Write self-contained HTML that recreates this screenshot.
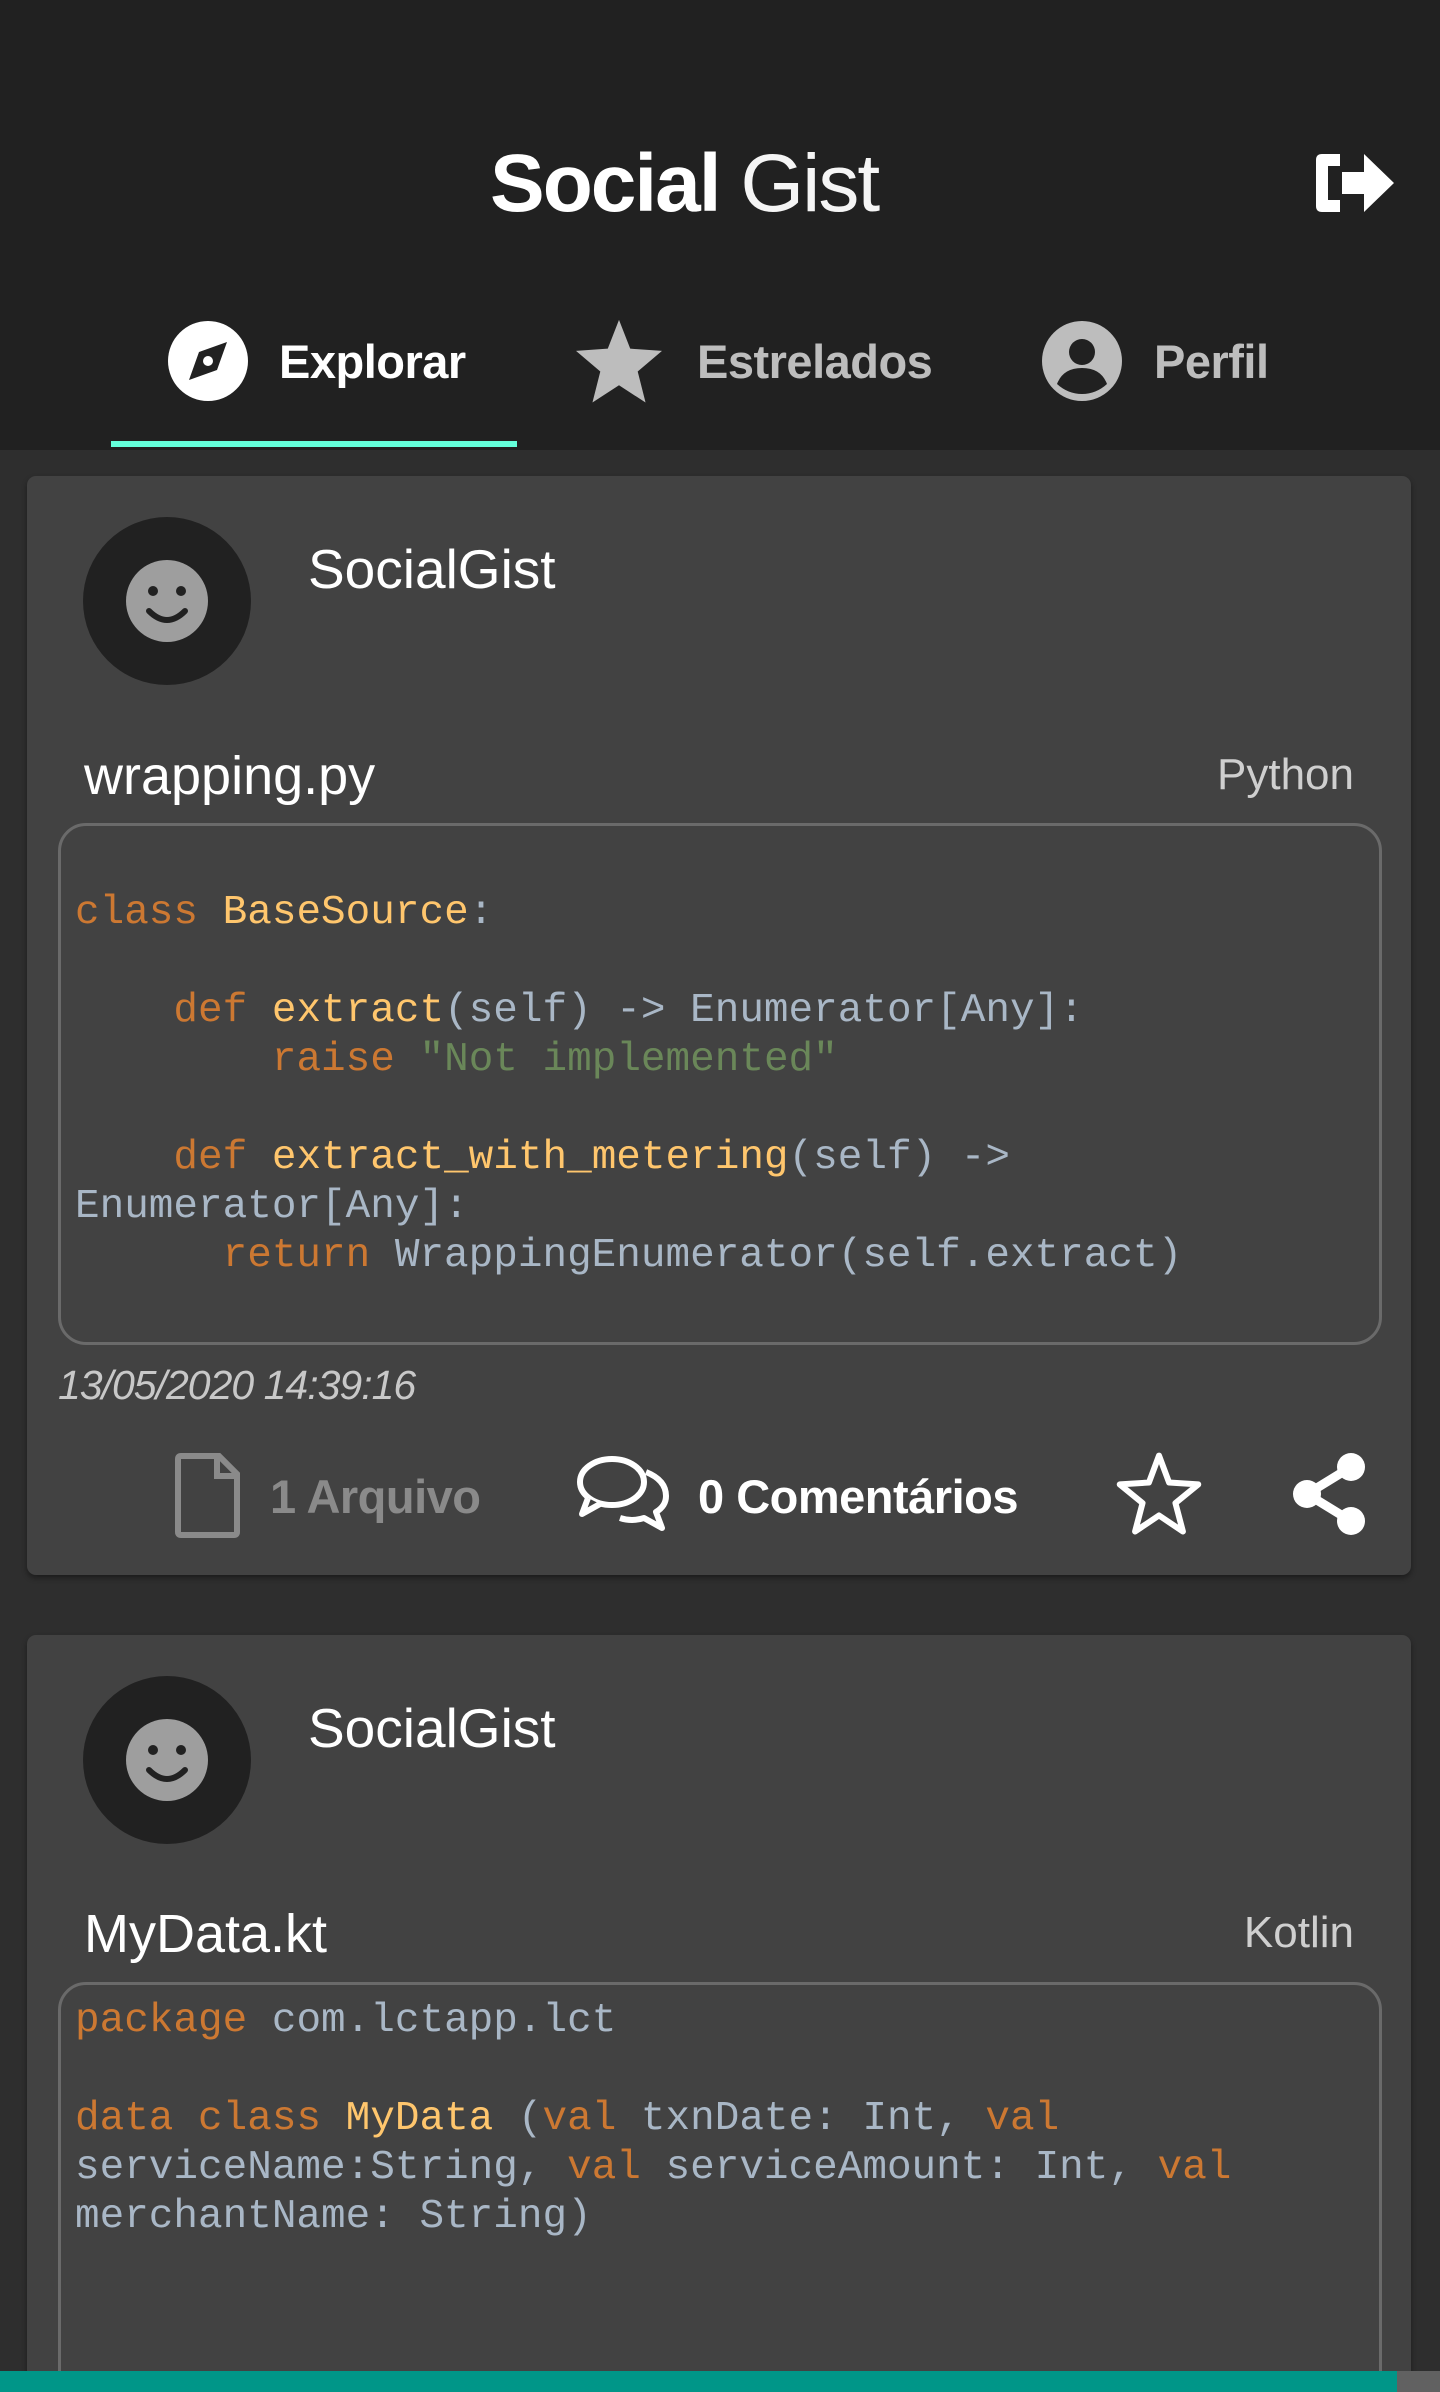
<!DOCTYPE html>
<html style="width:1440px;height:2392px;overflow:hidden"><head><meta charset="utf-8"><style>
*{margin:0;padding:0;box-sizing:border-box}
body{width:1440px;height:2392px;background:#2e2e2e;font-family:"Liberation Sans",sans-serif;overflow:hidden;position:relative;color:#fff}
.hdr{position:absolute;left:0;top:0;width:1440px;height:450px;background:#212121}
.title{position:absolute;left:490px;top:136px;white-space:nowrap;font-size:82px;line-height:96px;letter-spacing:-2px}
.title b{font-weight:700}.title span{font-weight:300;color:#f5f5f5}
.tab{position:absolute;top:333px;font-size:47px;line-height:58px;font-weight:700;letter-spacing:-0.5px}
.ul{position:absolute;left:111px;top:441px;width:406px;height:6px;background:#64ffda}
.card{position:absolute;left:27px;width:1384px;background:#424242;border-radius:9px;box-shadow:0 3px 6px rgba(0,0,0,.4)}
.av{position:absolute;left:56px;width:168px;height:168px;border-radius:50%;background:#212121}
.name{position:absolute;left:281px;font-size:55px;line-height:64px}
.fn{position:absolute;left:57px;font-size:54px;line-height:64px}
.lang{position:absolute;right:57px;font-size:44px;line-height:54px;color:#cfcfcf;font-weight:300}
.code{position:absolute;left:31px;width:1324px;border:3px solid #6a6a6a;border-radius:28px}
pre{position:absolute;left:14px;font-family:"Liberation Mono",monospace;font-size:41px;line-height:49px;color:#a9b7c6;white-space:pre}
.k{color:#cc7832}.f{color:#ffc66d}.s{color:#6a8759}
</style></head><body>
<div class="hdr"></div>
<div class="title"><b>Social</b> <span>Gist</span></div>
<svg style="position:absolute;left:1312px;top:150px" width="86" height="66" viewBox="0 0 86 66"><path d="M28 4H10Q4 4 4 10V56Q4 62 10 62H28V50H16V16H28Z" fill="#fff"/><path d="M30 22H52V4L82 33L52 62V44H30Z" fill="#fff"/></svg>
<svg style="position:absolute;left:167px;top:320px" width="82" height="82" viewBox="0 0 82 82"><circle cx="41" cy="41" r="40" fill="#fff"/><path d="M60 22L50 50L22 60L32 32Z" fill="#212121"/><circle cx="41" cy="41" r="5" fill="#fff"/></svg>
<div class="tab" style="left:279px;color:#fff">Explorar</div>
<svg style="position:absolute;left:574px;top:318px" width="90" height="86" viewBox="0 0 24 23"><path d="M12 0.5L15 8.2L23.5 8.8L17 14.3L19.1 22.6L12 18L4.9 22.6L7 14.3L0.5 8.8L9 8.2Z" fill="#bdbdbd"/></svg>
<div class="tab" style="left:697px;color:#bdbdbd">Estrelados</div>
<svg style="position:absolute;left:1041px;top:320px" width="82" height="82" viewBox="0 0 82 82"><circle cx="41" cy="41" r="40" fill="#bdbdbd"/><circle cx="41" cy="32" r="13" fill="#212121"/><path d="M16 64Q22 48 41 48Q60 48 66 64Q55 74 41 74Q27 74 16 64Z" fill="#212121"/></svg>
<div class="tab" style="left:1154px;color:#bdbdbd">Perfil</div>
<div class="ul"></div>

<div class="card" style="top:476px;height:1099px">
 <div class="av" style="top:41px"><svg width="168" height="168" viewBox="0 0 168 168"><circle cx="84" cy="84" r="41" fill="#9e9e9e"/><circle cx="70" cy="74" r="5" fill="#212121"/><circle cx="98" cy="74" r="5" fill="#212121"/><path d="M66 94Q84 112 102 94" stroke="#212121" stroke-width="6" fill="none" stroke-linecap="round"/></svg></div>
 <div class="name" style="top:61px">SocialGist</div>
 <div class="fn" style="top:268px">wrapping.py</div>
 <div class="lang" style="top:272px">Python</div>
 <div class="code" style="top:347px;height:522px">
<pre style="top:63px"><span class="k">class</span> <span class="f">BaseSource</span>:

    <span class="k">def</span> <span class="f">extract</span>(self) -&gt; Enumerator[Any]:
        <span class="k">raise</span> <span class="s">"Not implemented"</span>

    <span class="k">def</span> <span class="f">extract_with_metering</span>(self) -&gt;
Enumerator[Any]:
      <span class="k">return</span> WrappingEnumerator(self.extract)</pre>
 </div>
 <div style="position:absolute;left:31px;top:884px;font-size:41px;line-height:50px;font-style:italic;font-weight:300;color:#c8c8c8;letter-spacing:-1px">13/05/2020 14:39:16</div>
 <svg style="position:absolute;left:148px;top:976px" width="66" height="86" viewBox="0 0 66 86"><path d="M6 4H44L62 22V80Q62 83 59 83H6Q3 83 3 80V7Q3 4 6 4Z" fill="none" stroke="#8a8a8a" stroke-width="6"/><path d="M42 4V24H62" fill="none" stroke="#8a8a8a" stroke-width="6"/></svg>
 <div style="position:absolute;left:243px;top:992px;font-size:47px;line-height:58px;font-weight:700;color:#8a8a8a;letter-spacing:-0.5px">1 Arquivo</div>
 <svg style="position:absolute;left:547px;top:978px" width="98" height="80" viewBox="0 0 98 80"><ellipse cx="38" cy="28" rx="32" ry="23" fill="#424242" stroke="#fff" stroke-width="6"/><path d="M14 44L8 60L26 50" fill="#424242" stroke="#fff" stroke-width="6" stroke-linejoin="round"/><path d="M72 18Q92 26 92 42Q92 52 82 58L88 74L70 64Q58 68 46 64" fill="none" stroke="#fff" stroke-width="6" stroke-linejoin="round"/></svg>
 <div style="position:absolute;left:671px;top:992px;font-size:47px;line-height:58px;font-weight:700;color:#fff;letter-spacing:-0.5px">0 Comentários</div>
 <svg style="position:absolute;left:1087px;top:974px" width="90" height="86" viewBox="0 0 24 23"><path d="M12 1.5L14.7 8.7L22.5 9.2L16.4 14.2L18.4 21.8L12 17.5L5.6 21.8L7.6 14.2L1.5 9.2L9.3 8.7Z" fill="none" stroke="#fff" stroke-width="1.6" stroke-linejoin="round"/></svg>
 <svg style="position:absolute;left:1264px;top:976px" width="76" height="84" viewBox="0 0 76 84"><circle cx="60" cy="15" r="14" fill="#fff"/><circle cx="16" cy="42" r="14" fill="#fff"/><circle cx="60" cy="69" r="14" fill="#fff"/><path d="M60 15L16 42L60 69" stroke="#fff" stroke-width="9" fill="none"/></svg>
</div>

<div class="card" style="top:1635px;height:757px;overflow:hidden;border-radius:9px 9px 0 0">
 <div class="av" style="top:41px"><svg width="168" height="168" viewBox="0 0 168 168"><circle cx="84" cy="84" r="41" fill="#9e9e9e"/><circle cx="70" cy="74" r="5" fill="#212121"/><circle cx="98" cy="74" r="5" fill="#212121"/><path d="M66 94Q84 112 102 94" stroke="#212121" stroke-width="6" fill="none" stroke-linecap="round"/></svg></div>
 <div class="name" style="top:61px">SocialGist</div>
 <div class="fn" style="top:267px">MyData.kt</div>
 <div class="lang" style="top:271px">Kotlin</div>
 <div class="code" style="top:347px;height:500px">
<pre style="top:12px"><span class="k">package</span> com.lctapp.lct

<span class="k">data class</span> <span class="f">MyData</span> (<span class="k">val</span> txnDate: Int, <span class="k">val</span>
serviceName:String, <span class="k">val</span> serviceAmount: Int, <span class="k">val</span>
merchantName: String)</pre>
 </div>
</div>
<div style="position:absolute;left:0;top:2371px;width:1397px;height:21px;background:#009688"></div>
<div style="position:absolute;left:1397px;top:2371px;width:43px;height:21px;background:#616161"></div>
</body></html>
